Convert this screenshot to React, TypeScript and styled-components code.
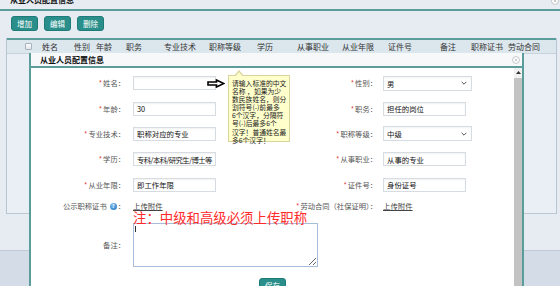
import React from "react";
import styled, { createGlobalStyle } from "styled-components";

const FONT = `"Noto Sans CJK SC", "Liberation Sans", sans-serif`;
const LINE_TEAL = "#5a9d9a";

const GlobalStyle = createGlobalStyle`
  html, body { margin: 0; padding: 0; }
  body { background: #e6ecf2; font-family: ${FONT}; overflow: hidden; }
`;

const Page = styled.div`
  position: relative;
  width: 560px;
  height: 286px;
  overflow: hidden;
  background: #e6ecf2;
  color: #333;
`;

const TitleBar = styled.div`
  height: 9px;
  border-bottom: 2px solid ${LINE_TEAL};
  display: flex;
  justify-content: space-between;
  overflow: hidden;
  padding: 0 1px 0 10px;
`;

const TitleText = styled.div`
  font-size: 8px;
  font-weight: bold;
  line-height: 8px;
  margin-top: -4px;
  color: #111;
`;

const IconWrap = styled.span<{ $offset?: number }>`
  display: inline-flex;
  margin-top: ${(p) => p.$offset ?? 0}px;
`;

const Toolbar = styled.div`
  display: flex;
  gap: 6px;
  height: 27px;
  box-sizing: border-box;
  padding: 5px 0 0 11px;
`;

const TealButton = styled.button`
  width: 27px;
  height: 15px;
  padding: 0;
  border: 1px solid #1f7b78;
  border-radius: 3px;
  background: #2a8f8b;
  color: #fff;
  font-family: ${FONT};
  font-size: 7.5px;
  line-height: 13px;
  cursor: pointer;
`;

const Grid = styled.div`
  margin-left: 6px;
  width: 551px;
  box-sizing: border-box;
  border-left: 1px solid #b7c5d1;
  border-right: 1px solid #b7c5d1;
`;

const GridHeader = styled.div`
  display: grid;
  grid-template-columns: 35px 32px 22px 30px 38px 45px 48px 40px 45px 46px 52px 31px 37px 1fr;
  align-items: center;
  height: 13px;
  border-top: 2px solid ${LINE_TEAL};
  border-bottom: 1px solid #c6d2dc;
  background: #dce6ed;
  font-size: 8px;
  color: #333;
  white-space: nowrap;
`;

const HeadCell = styled.div`
  line-height: 13px;
`;

const CheckCell = styled.div`
  display: flex;
  padding-left: 18px;
`;

const CheckBox = styled.span`
  width: 7px;
  height: 7px;
  box-sizing: border-box;
  border: 1px solid #a9b3bd;
  border-radius: 1px;
  background: linear-gradient(#fafafa, #e2e6ea);
`;

const GridBody = styled.div`
  height: 159px;
  background: #eaeff5;
  border-bottom: 1px solid #bcc9d5;
`;

const Pager = styled.div`
  margin-top: 36px;
  height: 40px;
  background: #d4dde7;
  border-top: 1px solid #bfcad6;
`;

const Dialog = styled.div`
  position: absolute;
  left: 29px;
  top: 53px;
  width: 495px;
  height: 250px;
  box-sizing: border-box;
  border-left: 2px solid ${LINE_TEAL};
  border-right: 2px solid ${LINE_TEAL};
  background: #fff;
  display: flex;
  flex-direction: column;
`;

const DialogHeader = styled.div`
  height: 13px;
  flex: none;
  display: flex;
  align-items: center;
  justify-content: space-between;
  padding: 0 2px 0 9px;
  background: #f6f8fa;
  border-bottom: 2px solid ${LINE_TEAL};
`;

const DialogTitle = styled.div`
  font-size: 8px;
  font-weight: bold;
  color: #111;
  line-height: 13px;
`;

const DialogBody = styled.div`
  flex: 1;
  display: flex;
  min-height: 0;
`;

const FormArea = styled.div`
  position: relative;
  flex: 1;
`;

const FormGrid = styled.div`
  display: grid;
  grid-template-columns: 94px 158px 94px 1fr;
  grid-template-rows: repeat(5, 25.3px) 18px 52px;
  align-items: center;
  padding-top: 2.7px;
`;

const Label = styled.div<{ $shift?: number }>`
  font-size: 7.3px;
  color: #555;
  text-align: right;
  white-space: nowrap;
  line-height: 10px;
  margin-top: ${(p) => p.$shift ?? 0}px;
  display: flex;
  justify-content: flex-end;
  align-items: center;
`;

const Star = styled.span`
  color: #e4393c;
  margin-right: 1px;
`;

const Help = styled.span`
  display: inline-flex;
  align-items: center;
  justify-content: center;
  width: 7px;
  height: 7px;
  border-radius: 50%;
  background: radial-gradient(circle at 35% 30%, #7cc0f0, #1d6fbf);
  color: #fff;
  font-size: 5px;
  font-weight: bold;
  margin: 0 1px 0 3px;
`;

const Field = styled.div<{ $pad: number; $span?: boolean; $shift?: number }>`
  position: relative;
  padding-left: ${(p) => p.$pad}px;
  grid-column: ${(p) => (p.$span ? "2 / 5" : "auto")};
  margin-top: ${(p) => p.$shift ?? 0}px;
  display: flex;
  align-items: center;
`;

const TextInput = styled.input<{ $tight?: boolean }>`
  width: 83px;
  height: 14px;
  box-sizing: border-box;
  border: 1px solid #d6dce2;
  padding: 0 2px 0 3px;
  font-family: ${FONT};
  font-size: 7.4px;
  letter-spacing: ${(p) => (p.$tight ? "-0.6px" : "0")};
  color: #111;
  background: #fff;
  outline: none;
  box-shadow: inset 0 1px 2px rgba(0, 0, 0, 0.06);
`;

const SelectBox = styled.div`
  width: 89px;
  height: 15px;
  box-sizing: border-box;
  border: 1px solid #d6dce2;
  padding: 0 4px 0 3px;
  display: flex;
  align-items: center;
  justify-content: space-between;
  font-size: 7.4px;
  color: #111;
  background: #fff;
  box-shadow: inset 0 1px 2px rgba(0, 0, 0, 0.05);
`;

const UploadLink = styled.a`
  font-size: 7.4px;
  color: #444;
  text-decoration: underline;
  line-height: 10px;
`;

const Remark = styled.textarea`
  width: 185px;
  height: 44px;
  box-sizing: border-box;
  border: 1px solid #a7bedb;
  padding: 1px 2px;
  font-family: ${FONT};
  font-size: 7.5px;
  outline: none;
  resize: both;
`;

const Caret = styled.span`
  position: absolute;
  left: 10px;
  top: 3px;
  width: 1px;
  height: 6px;
  background: #333;
`;

const SaveRow = styled.div`
  display: flex;
  justify-content: center;
  padding-top: 11px;
`;

const Note = styled.div`
  position: absolute;
  left: 102px;
  top: 142px;
  font-size: 13.4px;
  line-height: 15px;
  color: #ff2a2a;
  white-space: nowrap;
`;

const Tip = styled.div`
  position: absolute;
  left: 197px;
  top: 7px;
  width: 62px;
  height: 67px;
  box-sizing: border-box;
  padding: 3px 2px 0 3px;
  background: #ffffcc;
  border: 1px solid #d9d39c;
  font-size: 6.8px;
  line-height: 8.1px;
  color: #222;
  white-space: nowrap;
  &::before {
    content: "";
    position: absolute;
    left: 5px;
    top: -6px;
    border: 5px solid transparent;
    border-top: 0;
    border-bottom: 6px solid #d9d39c;
  }
  &::after {
    content: "";
    position: absolute;
    left: 6px;
    top: -4px;
    border: 4px solid transparent;
    border-top: 0;
    border-bottom: 5px solid #ffffcc;
  }
`;

const TipLine = styled.div``;

const Pointer = styled.div`
  position: absolute;
  left: 176px;
  top: 11px;
  display: flex;
`;

const Scrollbar = styled.div`
  width: 8px;
  flex: none;
  display: flex;
  flex-direction: column;
  background: #f1f1f1;
`;

const ScrollUp = styled.div`
  height: 9px;
  display: flex;
  align-items: center;
  justify-content: center;
`;

const ScrollThumb = styled.div`
  flex: 1;
  margin-top: 1px;
  background: #c3c3c3;
`;

const CloseIcon = ({ size = 8 }: { size?: number }) => (
  <svg width={size} height={size} viewBox="0 0 10 10">
    <circle cx="5" cy="5" r="4.3" fill="#fff" stroke="#b4b4b4" strokeWidth="0.9" />
    <path d="M3.4 3.4 L6.6 6.6 M6.6 3.4 L3.4 6.6" stroke="#b4b4b4" strokeWidth="0.9" />
  </svg>
);

const Chevron = () => (
  <svg width="6" height="4" viewBox="0 0 6 4">
    <path d="M0.6 0.8 L3 3.2 L5.4 0.8" fill="none" stroke="#555" strokeWidth="1" />
  </svg>
);

const columns = [
  "姓名", "性别", "年龄", "职务", "专业技术", "职称等级", "学历",
  "从事职业", "从业年限", "证件号", "备注", "职称证书", "劳动合同",
];

const tipLines = [
  "请输入标准的中文",
  "名称 ，如果为少",
  "数民族姓名，则分",
  "割符号(-)前最多",
  "6个汉字，分隔符",
  "号(-)后最多6个",
  "汉字！普通姓名最",
  "多6个汉字！",
];

type Cell =
  | { kind: "input"; value: string; tight?: boolean }
  | { kind: "select"; value: string };

const rows: { l: string; lv: Cell; r: string; rv: Cell }[] = [
  { l: "姓名", lv: { kind: "input", value: "" }, r: "性别", rv: { kind: "select", value: "男" } },
  { l: "年龄", lv: { kind: "input", value: "30" }, r: "职务", rv: { kind: "input", value: "担任的岗位" } },
  { l: "专业技术", lv: { kind: "input", value: "职称对应的专业" }, r: "职称等级", rv: { kind: "select", value: "中级" } },
  { l: "学历", lv: { kind: "input", value: "专科/本科/研究生/博士等", tight: true }, r: "从事职业", rv: { kind: "input", value: "从事的专业" } },
  { l: "从业年限", lv: { kind: "input", value: "即工作年限" }, r: "证件号", rv: { kind: "input", value: "身份证号" } },
];

const renderCell = (c: Cell) =>
  c.kind === "input" ? (
    <TextInput defaultValue={c.value} $tight={c.tight} />
  ) : (
    <SelectBox>
      <span>{c.value}</span>
      <Chevron />
    </SelectBox>
  );

export default function App() {
  return (
    <Page>
      <GlobalStyle />
      <TitleBar>
        <TitleText>从业人员配置信息</TitleText>
        <IconWrap $offset={-3}>
          <CloseIcon size={8} />
        </IconWrap>
      </TitleBar>
      <Toolbar>
        <TealButton>增加</TealButton>
        <TealButton>编辑</TealButton>
        <TealButton>删除</TealButton>
      </Toolbar>
      <Grid>
        <GridHeader>
          <CheckCell>
            <CheckBox />
          </CheckCell>
          {columns.map((c) => (
            <HeadCell key={c}>{c}</HeadCell>
          ))}
        </GridHeader>
        <GridBody />
      </Grid>
      <Pager />

      <Dialog>
        <DialogHeader>
          <DialogTitle>从业人员配置信息</DialogTitle>
          <CloseIcon size={8} />
        </DialogHeader>
        <DialogBody>
          <FormArea>
            <FormGrid>
              {rows.map((r) => (
                <React.Fragment key={r.l}>
                  <Label>
                    <Star>*</Star>
                    {r.l}：
                  </Label>
                  <Field $pad={8}>{renderCell(r.lv)}</Field>
                  <Label>
                    <Star>*</Star>
                    {r.r}：
                  </Label>
                  <Field $pad={6}>{renderCell(r.rv)}</Field>
                </React.Fragment>
              ))}
              <Label>
                公示职称证书<Help>?</Help>：
              </Label>
              <Field $pad={8}>
                <UploadLink href="#">上传附件</UploadLink>
              </Field>
              <Label>
                <Star>*</Star>劳动合同（社保证明）：
              </Label>
              <Field $pad={6}>
                <UploadLink href="#">上传附件</UploadLink>
              </Field>
              <Label $shift={8}>备注：</Label>
              <Field $pad={8} $span $shift={8}>
                <Remark />
                <Caret />
              </Field>
            </FormGrid>
            <SaveRow>
              <TealButton>保存</TealButton>
            </SaveRow>

            <Pointer>
              <svg width="18" height="9" viewBox="0 0 18 9">
                <path
                  d="M1 3 H9.5 V1 L16.8 4.5 L9.5 8 V6 H1 Z"
                  fill="#fff"
                  stroke="#000"
                  strokeWidth="1.6"
                  strokeLinejoin="miter"
                />
              </svg>
            </Pointer>
            <Tip>
              {tipLines.map((t) => (
                <TipLine key={t}>{t}</TipLine>
              ))}
            </Tip>
            <Note>注：中级和高级必须上传职称</Note>
          </FormArea>
          <Scrollbar>
            <ScrollUp>
              <svg width="5" height="3" viewBox="0 0 5 3">
                <path d="M0 3 L2.5 0 L5 3 Z" fill="#333" />
              </svg>
            </ScrollUp>
            <ScrollThumb />
          </Scrollbar>
        </DialogBody>
      </Dialog>
    </Page>
  );
}
